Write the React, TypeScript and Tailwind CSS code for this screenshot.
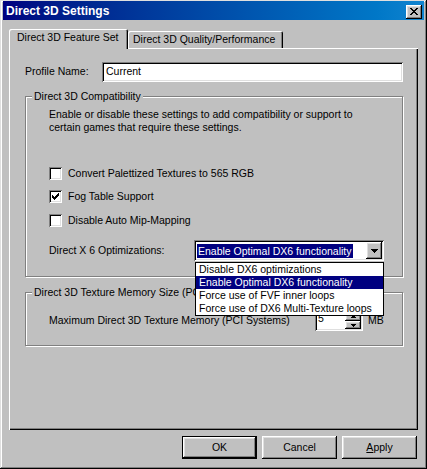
import React from 'react';

const FONT = "font-['Liberation_Sans',Arial,Helvetica,sans-serif]";
const RAISED = 'shadow-[inset_-1px_-1px_#000,inset_1px_1px_#fff,inset_-2px_-2px_#808080,inset_2px_2px_#dfdfdf]';
const SUNKEN = 'shadow-[inset_1px_1px_#808080,inset_-1px_-1px_#fff,inset_2px_2px_#000,inset_-2px_-2px_#dfdfdf]';

const Pix = ({ w, h, d }: { w: number; h: number; d: string }) => (
  <svg width={w} height={h} viewBox={`0 0 ${w} ${h}`} shapeRendering="crispEdges">
    <path d={d} fill="#000" />
  </svg>
);

const CHECK = 'M6 0h1v1h-1z M5 1h2v1h-2z M0 2h1v1h-1z M4 2h3v1h-3z M0 3h2v1h-2z M3 3h3v1h-3z M0 4h5v1h-5z M1 5h3v1h-3z M2 6h1v1h-1z';
const CLOSE = 'M0 0h2v1h-2z M6 0h2v1h-2z M1 1h2v1h-2z M5 1h2v1h-2z M2 2h4v1h-4z M3 3h2v1h-2z M2 4h4v1h-4z M1 5h2v1h-2z M5 5h2v1h-2z M0 6h2v1h-2z M6 6h2v1h-2z';
const DOWN7 = 'M0 0h7v1h-7z M1 1h5v1h-5z M2 2h3v1h-3z M3 3h1v1h-1z';
const UP5 = 'M2 0h1v1h-1z M1 1h3v1h-3z M0 2h5v1h-5z';
const DOWN5 = 'M0 0h5v1h-5z M1 1h3v1h-3z M2 2h1v1h-1z';

const Checkbox = ({ checked, label }: { checked?: boolean; label: string }) => (
  <div className="flex items-center h-[13px]">
    <div className={`w-[13px] h-[13px] bg-white ${SUNKEN} flex items-center justify-center`}>
      {checked && <Pix w={7} h={7} d={CHECK} />}
    </div>
    <span className="ml-[6px] leading-[13px] whitespace-nowrap">{label}</span>
  </div>
);

const Group = ({ title, className, children }: { title: string; className: string; children: React.ReactNode }) => (
  <div className={`relative border border-[#808080] shadow-[inset_1px_1px_#fff,1px_1px_#fff] ${className}`}>
    <span className="absolute -top-[7px] left-[6px] bg-[#c0c0c0] px-[2px] leading-[13px] whitespace-nowrap">{title}</span>
    {children}
  </div>
);

const options = [
  'Disable DX6 optimizations',
  'Enable Optimal DX6 functionality',
  'Force use of FVF inner loops',
  'Force use of DX6 Multi-Texture loops',
];

export default function App() {
  return (
    <div
      className={`relative w-[427px] h-[469px] overflow-hidden bg-[#c0c0c0] text-[10.5px] text-black ${FONT} shadow-[inset_-1px_-1px_#000,inset_1px_1px_#dfdfdf,inset_-2px_-2px_#808080,inset_2px_2px_#fff]`}
    >
      {/* title bar */}
      <div className="mx-[3px] mt-[1px] h-[19px] flex items-center justify-between bg-linear-to-r from-[#000080] to-[#1084d0] pl-[3px] pr-[2px]">
        <span className="text-white font-bold text-[12px] leading-[19px] pt-[2px]">Direct 3D Settings</span>
        <div className={`w-[16px] h-[14px] mt-[2px] bg-[#c0c0c0] ${RAISED} flex items-center justify-center`}>
          <Pix w={8} h={7} d={CLOSE} />
        </div>
      </div>

      {/* tabs */}
      <div className="ml-[9px] mt-[9px] h-[19px] flex items-end">
        <div className="relative z-10 -mb-[1px] h-[20px] w-[119px] pl-[8px] pt-[2px] leading-[13px] whitespace-nowrap bg-[#c0c0c0] rounded-t-[2px] shadow-[inset_1px_1px_#fff,inset_-1px_0_#000,inset_-2px_0_#808080]">
          Direct 3D Feature Set
        </div>
        <div className="h-[17px] w-[155px] pl-[5px] pt-[2px] leading-[13px] whitespace-nowrap rounded-t-[2px] shadow-[inset_1px_1px_#fff,inset_-1px_0_#000,inset_-2px_0_#808080]">
          Direct 3D Quality/Performance
        </div>
      </div>

      {/* tab panel */}
      <div className="ml-[9px] w-[409px] h-[382px] pt-[14px] pl-[16px] shadow-[inset_1px_1px_#fff,inset_-1px_-1px_#000,inset_-2px_-2px_#808080]">
        <div className="flex items-center h-[20px]">
          <span className="w-[77px]">Profile Name:</span>
          <div className={`w-[301px] h-[20px] bg-white ${SUNKEN} pl-[4px] flex items-center`}>Current</div>
        </div>

        <Group title="Direct 3D Compatibility" className="mt-[14px] w-[378px] h-[181px]">
          <div className="pl-[23px] pt-[11px]">
            <p className="leading-[13px] whitespace-nowrap">
              Enable or disable these settings to add compatibility or support to
              <br />
              certain games that require these settings.
            </p>
            <div className="mt-[33px]">
              <Checkbox label="Convert Palettized Textures to 565 RGB" />
              <div className="mt-[10px]">
                <Checkbox checked label="Fog Table Support" />
              </div>
              <div className="mt-[11px]">
                <Checkbox label="Disable Auto Mip-Mapping" />
              </div>
            </div>
            <div className="mt-[13px] flex items-center">
              <span className="w-[145px] whitespace-nowrap">Direct X 6 Optimizations:</span>
              <div className={`relative w-[190px] h-[21px] bg-white ${SUNKEN} p-[2px] flex items-center`}>
                <span className="ml-[1px] px-[1px] bg-[#000080] text-white leading-[14px] whitespace-nowrap">
                  Enable Optimal DX6 functionality
                </span>
                <div className={`ml-auto w-[16px] h-[17px] bg-[#c0c0c0] ${RAISED} flex items-center justify-center`}>
                  <Pix w={7} h={4} d={DOWN7} />
                </div>
                <div className="absolute left-[1px] top-[22px] z-20 w-[189px] border border-black bg-white">
                  {options.map((o, i) => (
                    <div
                      key={o}
                      className={`h-[13px] leading-[13px] pl-[3px] whitespace-nowrap ${i === 1 ? 'bg-[#000080] text-white' : ''}`}
                    >
                      {o}
                    </div>
                  ))}
                </div>
              </div>
            </div>
          </div>
        </Group>

        <Group title="Direct 3D Texture Memory Size (PCI Systems)" className="mt-[15px] w-[378px] h-[54px]">
          <div className="pl-[23px] pt-[17px] flex items-center">
            <span className="w-[266px] whitespace-nowrap">Maximum Direct 3D Texture Memory (PCI Systems)</span>
            <div className={`w-[48px] h-[21px] bg-white ${SUNKEN} p-[2px] flex`}>
              <span className="flex-1 pl-[1px] leading-[13px]">5</span>
              <div className="w-[16px] flex flex-col">
                <div className={`h-[9px] bg-[#c0c0c0] ${RAISED} flex items-center justify-center`}>
                  <Pix w={5} h={3} d={UP5} />
                </div>
                <div className={`h-[8px] bg-[#c0c0c0] ${RAISED} flex items-center justify-center`}>
                  <Pix w={5} h={3} d={DOWN5} />
                </div>
              </div>
            </div>
            <span className="ml-[5px]">MB</span>
          </div>
        </Group>
      </div>

      {/* dialog buttons */}
      <div className="mt-[6px] pr-[10px] flex justify-end gap-[5px]">
        <button className="w-[75px] h-[23px] bg-[#c0c0c0] shadow-[inset_0_0_0_1px_#000,inset_-2px_-2px_#000,inset_2px_2px_#fff,inset_-3px_-3px_#808080,inset_3px_3px_#dfdfdf]">
          OK
        </button>
        <button className={`w-[75px] h-[23px] bg-[#c0c0c0] ${RAISED}`}>Cancel</button>
        <button className={`w-[75px] h-[23px] bg-[#c0c0c0] ${RAISED}`}>
          <span className="underline">A</span>pply
        </button>
      </div>
    </div>
  );
}
